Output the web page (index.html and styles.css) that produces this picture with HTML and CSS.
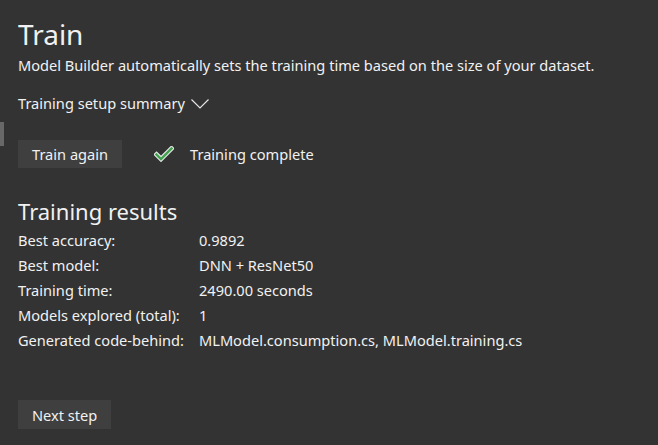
FILE: index.html
```html
<!DOCTYPE html>
<html>
<head>
<meta charset="utf-8">
<link rel="stylesheet" href="styles.css">
</head>
<body>
<div class="scroll-thumb"></div>
<main class="page">
  <h1 class="title">Train</h1>
  <p class="subtitle">Model Builder automatically sets the training time based on the size of your dataset.</p>
  <div class="summary">
    <span>Training setup summary</span>
    <svg class="chevron" width="18" height="10" viewBox="0 0 18 10"><path d="M0.5 0.5 L9 9 L17.5 0.5" fill="none" stroke="#e6e6e6" stroke-width="1.2"/></svg>
  </div>
  <div class="actions">
    <button class="btn">Train again</button>
    <div class="status">
      <svg class="check" width="20" height="16" viewBox="0 0 20 16">
        <path d="M2.5 8.5 L7 13 L17.5 2.5" fill="none" stroke="#e8e8e8" stroke-width="4.6" stroke-linecap="square" stroke-linejoin="miter"/>
        <path d="M2.5 8.5 L7 13 L17.5 2.5" fill="none" stroke="#3fa34d" stroke-width="2.4" stroke-linecap="square" stroke-linejoin="miter"/>
      </svg>
      <span>Training complete</span>
    </div>
  </div>
  <h2 class="results-title">Training results</h2>
  <dl class="results">
    <dt>Best accuracy:</dt><dd>0.9892</dd>
    <dt>Best model:</dt><dd>DNN + ResNet50</dd>
    <dt>Training time:</dt><dd>2490.00 seconds</dd>
    <dt>Models explored (total):</dt><dd>1</dd>
    <dt>Generated code-behind:</dt><dd>MLModel.consumption.cs, MLModel.training.cs</dd>
  </dl>
  <button class="btn next">Next step</button>
</main>
</body>
</html>
```
FILE: styles.css
```css
html, body {
  margin: 0;
  padding: 0;
  background: #333333;
  height: 100%;
  overflow: hidden;
}
body {
  font-family: "Noto Sans", "Open Sans", sans-serif;
  color: #f1f1f1;
  font-size: 14.6px;
  position: relative;
}
.scroll-thumb {
  position: absolute;
  left: 0;
  top: 122px;
  width: 4px;
  height: 24px;
  background: #686868;
}
.page {
  padding: 14px 18px 0 18px;
  display: flex;
  flex-direction: column;
  align-items: flex-start;
}
.title {
  margin: 0;
  font-weight: normal;
  font-size: 28px;
  line-height: 40px;
}
.subtitle {
  margin: 0;
  line-height: 22px;
}
.summary {
  margin-top: 16px;
  display: flex;
  align-items: center;
  gap: 6px;
  line-height: 22px;
}
.chevron { margin-top: 2px; }
.actions {
  margin-top: 26px;
  display: flex;
  align-items: center;
  gap: 32px;
}
.btn {
  font: inherit;
  color: #f1f1f1;
  background: #3f3f3f;
  border: none;
  padding: 0 14px;
  height: 28px;
  line-height: 28px;
}
.status {
  display: flex;
  align-items: center;
  gap: 16px;
}
.results-title {
  margin: 27px 0 0 0;
  font-weight: normal;
  font-size: 22px;
  line-height: 32px;
}
.results {
  margin: 0;
  display: grid;
  grid-template-columns: 181px auto;
  grid-auto-rows: 25px;
  align-items: center;
}
.results dt, .results dd { margin: 0; white-space: nowrap; }
.next {
  margin-top: 48px;
  height: 29px;
}
```
